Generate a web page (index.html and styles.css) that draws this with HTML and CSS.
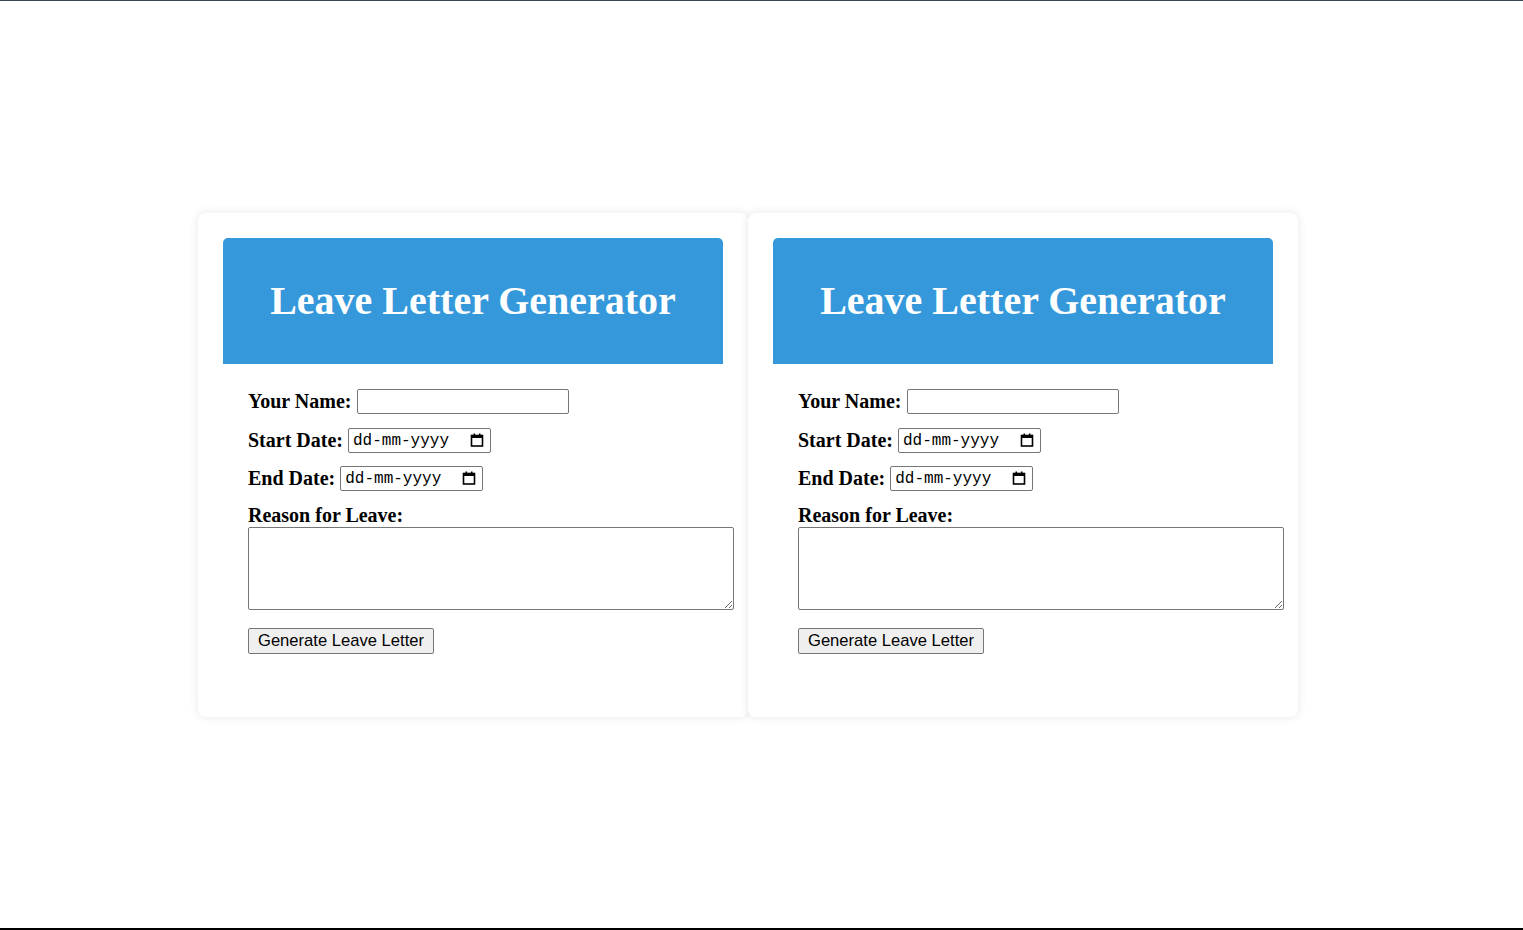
FILE: index.html
```html
<!DOCTYPE html>
<html>
<head>
<meta charset="utf-8">
<title>Leave Letter Generator</title>
<link rel="stylesheet" href="styles.css">
</head>
<body>
<div class="page">
  <div class="card">
    <div class="card-header"><h1>Leave Letter Generator</h1></div>
    <form class="form">
      <div class="row"><label>Your Name:</label><input class="text-input" type="text"></div>
      <div class="row"><label>Start Date:</label>
        <div class="date-field"><input class="date-text" type="text" placeholder="dd-mm-yyyy"><svg class="cal" width="14" height="14" viewBox="0 0 14 14"><rect x="1.5" y="2.5" width="11" height="10.5" fill="none" stroke="#000" stroke-width="1.6"/><rect x="1.5" y="2.5" width="11" height="2.5" fill="#000"/><rect x="3.5" y="0.5" width="1.6" height="2.5" fill="#000"/><rect x="8.9" y="0.5" width="1.6" height="2.5" fill="#000"/></svg></div>
      </div>
      <div class="row"><label>End Date:</label>
        <div class="date-field"><input class="date-text" type="text" placeholder="dd-mm-yyyy"><svg class="cal" width="14" height="14" viewBox="0 0 14 14"><rect x="1.5" y="2.5" width="11" height="10.5" fill="none" stroke="#000" stroke-width="1.6"/><rect x="1.5" y="2.5" width="11" height="2.5" fill="#000"/><rect x="3.5" y="0.5" width="1.6" height="2.5" fill="#000"/><rect x="8.9" y="0.5" width="1.6" height="2.5" fill="#000"/></svg></div>
      </div>
      <label class="block-label">Reason for Leave:</label>
      <textarea class="reason"></textarea>
      <button type="button" class="btn">Generate Leave Letter</button>
    </form>
  </div>
  <div class="card">
    <div class="card-header"><h1>Leave Letter Generator</h1></div>
    <form class="form">
      <div class="row"><label>Your Name:</label><input class="text-input" type="text"></div>
      <div class="row"><label>Start Date:</label>
        <div class="date-field"><input class="date-text" type="text" placeholder="dd-mm-yyyy"><svg class="cal" width="14" height="14" viewBox="0 0 14 14"><rect x="1.5" y="2.5" width="11" height="10.5" fill="none" stroke="#000" stroke-width="1.6"/><rect x="1.5" y="2.5" width="11" height="2.5" fill="#000"/><rect x="3.5" y="0.5" width="1.6" height="2.5" fill="#000"/><rect x="8.9" y="0.5" width="1.6" height="2.5" fill="#000"/></svg></div>
      </div>
      <div class="row"><label>End Date:</label>
        <div class="date-field"><input class="date-text" type="text" placeholder="dd-mm-yyyy"><svg class="cal" width="14" height="14" viewBox="0 0 14 14"><rect x="1.5" y="2.5" width="11" height="10.5" fill="none" stroke="#000" stroke-width="1.6"/><rect x="1.5" y="2.5" width="11" height="2.5" fill="#000"/><rect x="3.5" y="0.5" width="1.6" height="2.5" fill="#000"/><rect x="8.9" y="0.5" width="1.6" height="2.5" fill="#000"/></svg></div>
      </div>
      <label class="block-label">Reason for Leave:</label>
      <textarea class="reason"></textarea>
      <button type="button" class="btn">Generate Leave Letter</button>
    </form>
  </div>
</div>
</body>
</html>
```

FILE: styles.css
```css
* { box-sizing: border-box; }
html, body { margin: 0; padding: 0; background: #fff; }
body { font-family: "Liberation Serif", "Times New Roman", serif; color: #000; }
.page {
  height: 930px;
  border-top: 1px solid #37474f;
  border-bottom: 2px solid #000;
  display: flex;
  align-items: center;
  padding-left: 198px;
}
.card {
  width: 550px;
  height: 504px;
  padding: 25px;
  background: #fff;
  border-radius: 8px;
  box-shadow: 0 0 10px rgba(0, 0, 0, 0.1);
}
.card-header {
  height: 126px;
  background: #3498db;
  border-radius: 5px 5px 0 0;
  display: flex;
  align-items: center;
  justify-content: center;
  color: #fff;
}
.card-header h1 {
  margin: 0;
  font-size: 40px;
  font-weight: bold;
}
.form {
  padding: 25px 25px 0 25px;
  display: flex;
  flex-direction: column;
  align-items: flex-start;
}
.row {
  display: flex;
  align-items: center;
  gap: 5px;
  height: 25px;
  margin-bottom: 13px;
}
.row:first-child { margin-bottom: 14px; }
label {
  font-size: 20px;
  font-weight: bold;
}
.text-input {
  width: 212px;
  height: 25px;
  border: 1px solid #767676;
  border-radius: 2px;
  background: #fff;
  padding: 1px 4px;
  font-size: 16px;
}
.date-field {
  width: 143px;
  height: 25px;
  border: 1px solid #767676;
  border-radius: 2px;
  background: #fff;
  display: flex;
  align-items: center;
  padding: 2px 6px 0 4px;
}
.date-text {
  flex: 1;
  min-width: 0;
  border: 0;
  padding: 0;
  outline: none;
  background: transparent;
  font-family: "Liberation Mono", monospace;
  font-size: 16px;
  color: #000;
}
.date-text::placeholder { color: #000; opacity: 1; }
.cal { flex: none; margin-top: -2px; }
.block-label {
  display: block;
}
.reason {
  width: 486px;
  height: 83px;
  margin: 0;
  border: 1px solid #767676;
  border-radius: 2px;
  resize: both;
}
.btn {
  margin-top: 18px;
  width: 186px;
  height: 26px;
  padding: 1px 6px;
  font-family: "Liberation Sans", Arial, sans-serif;
  font-size: 16.6px;
  color: #000;
  background: #efefef;
  border: 1px solid #767676;
  border-radius: 2px;
}
```
